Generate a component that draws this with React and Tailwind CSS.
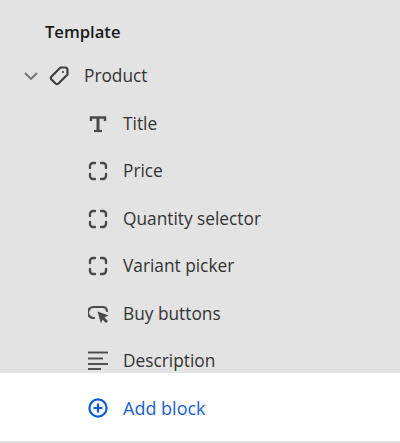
import React from 'react';

const TitleIcon = () => (
  <svg width="20" height="20" viewBox="0 0 20 20" fill="none" stroke="#4a4a4a" strokeWidth="2.4">
    <path d="M3 7V3.5H17V7" />
    <path d="M10 3.5V17" strokeWidth="3" />
    <path d="M6 17H14" strokeWidth="2.2" />
  </svg>
);

const DashedIcon = () => (
  <svg width="20" height="20" viewBox="0 0 20 20" fill="none" stroke="#4a4a4a" strokeWidth="2.4" strokeLinecap="round">
    <path d="M2 7V5A3 3 0 0 1 5 2H7" />
    <path d="M13 2H15A3 3 0 0 1 18 5V7" />
    <path d="M18 13V15A3 3 0 0 1 15 18H13" />
    <path d="M7 18H5A3 3 0 0 1 2 15V13" />
  </svg>
);

const BuyIcon = () => (
  <svg width="22" height="20" viewBox="0 0 22 20" fill="none">
    <path d="M6 14H5.5A4.5 4.5 0 0 1 5.5 3H14.5A4.5 4.5 0 0 1 19 7" stroke="#4a4a4a" strokeWidth="2.2" strokeLinecap="round" />
    <path d="M9.5 7.5L20.5 11.5L16.5 13.5L20 17L18 19L14.5 15.5L13 19.5Z" fill="#4a4a4a" />
  </svg>
);

const LinesIcon = () => (
  <svg width="20" height="20" viewBox="0 0 20 20" fill="none" stroke="#4a4a4a" strokeWidth="1.9">
    <path d="M0 1.5H20" />
    <path d="M0 7.5H15" />
    <path d="M0 13H20" />
    <path d="M0 18H13" />
  </svg>
);

const rows = [
  { label: 'Title', icon: <TitleIcon /> },
  { label: 'Price', icon: <DashedIcon /> },
  { label: 'Quantity selector', icon: <DashedIcon /> },
  { label: 'Variant picker', icon: <DashedIcon /> },
  { label: 'Buy buttons', icon: <BuyIcon /> },
  { label: 'Description', icon: <LinesIcon /> },
];

export default function App() {
  return (
    <div className="w-[400px] h-[443px] overflow-hidden bg-[#e3e3e3] font-['Open_Sans',sans-serif] text-[17.3px] text-[#333333]">
      {/* Tree */}
      <div className="h-[373px] overflow-hidden bg-[#e3e3e3]">
        <div className="h-[52.5px] pl-[45px] pt-[19px] leading-[26px] text-[16.6px] font-semibold text-[#1a1a1a]">Template</div>
        <div className="flex items-center h-[47.5px] pl-[22px]">
          <svg width="18" height="18" viewBox="0 0 18 18" fill="none" stroke="#707070" strokeWidth="1.8">
            <path d="M3 6L9 12L15 6" />
          </svg>
          <svg className="ml-[8px]" width="22" height="22" viewBox="0 0 22 22" fill="none" stroke="#3f3f3f" strokeWidth="2.2" strokeLinejoin="round">
            <path d="M12.5 2.5H17A2.5 2.5 0 0 1 19.5 5V9.5L10.5 18.5A2.2 2.2 0 0 1 7.5 18.5L3.5 14.5A2.2 2.2 0 0 1 3.5 11.5Z" />
            <circle cx="15" cy="7" r="1.1" fill="#3f3f3f" stroke="none" />
          </svg>
          <span className="ml-[14px]">Product</span>
        </div>
        {rows.map(row => (
          <div key={row.label} className="flex items-center h-[47.5px] pl-[88px]">
            <span className="flex w-[35px] shrink-0">{row.icon}</span>
            <span>{row.label}</span>
          </div>
        ))}
      </div>

      {/* Add block */}
      <div className="flex items-center h-[68px] pt-[2px] pl-[88px] bg-white text-[18px] text-[#1a5fd0]">
        <span className="flex w-[35px] shrink-0">
          <svg width="20" height="20" viewBox="0 0 20 20" fill="none" stroke="#0b5bd8" strokeWidth="2.2">
            <circle cx="10" cy="10" r="8.6" />
            <path d="M10 5.5V14.5M5.5 10H14.5" />
          </svg>
        </span>
        <span>Add block</span>
      </div>
    </div>
  );
}
